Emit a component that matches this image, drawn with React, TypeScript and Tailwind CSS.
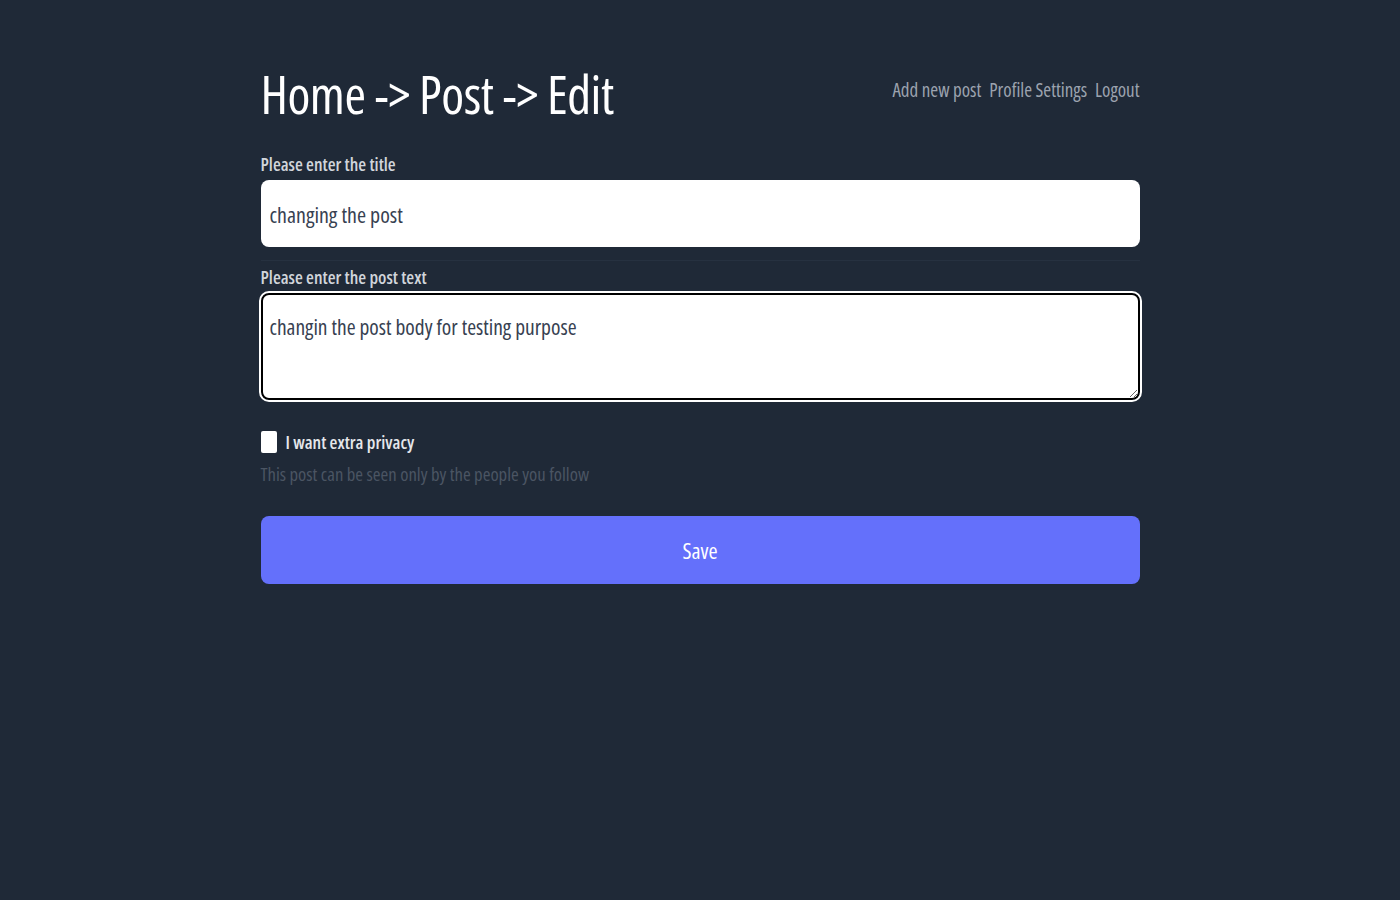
export default function App() {
  return (
    <div className="min-h-screen bg-[#1f2937] font-['Open_Sans','DejaVu_Sans',sans-serif] [font-stretch:75%]">
      <div className="mx-auto w-[879px] pt-[58px]">
        {/* Header */}
        <div className="flex items-start justify-between">
          <h1 className="text-[52px] leading-[72px] text-white font-normal tracking-[-0.5px]">Home -&gt; Post -&gt; Edit</h1>
          <nav className="flex gap-[8px] pt-[18px] text-[19px] leading-[28px] text-[#9ca3af]">
            <a href="#">Add new post</a>
            <a href="#">Profile Settings</a>
            <a href="#">Logout</a>
          </nav>
        </div>

        {/* Title */}
        <label className="mt-[20px] block text-[18px] leading-[28px] font-semibold text-[#d1d5db]">Please enter the title</label>
        <input
          className="mt-[2px] block h-[67px] w-full rounded-lg bg-white px-[9px] text-[22px] text-[#374151] outline-none"
          defaultValue="changing the post"
        />

        {/* Body */}
        <label className="mt-[13px] block border-t border-[#263140] pt-[2px] text-[18px] leading-[28px] font-semibold text-[#d1d5db]">Please enter the post text</label>
        <textarea
          className="mt-[2px] block h-[107px] w-full resize-y rounded-lg border-2 border-black bg-white px-[7px] pt-[17px] text-[21.5px] leading-[30px] text-[#374151] outline outline-2 outline-white"
          defaultValue="changin the post body for testing purpose"
        />

        {/* Privacy */}
        <label className="mt-[28px] flex items-center gap-[9px] text-[18px] leading-[28px] font-semibold text-[#e5e7eb]">
          <span className="block h-[22px] w-[16px] rounded-[2px] bg-white" />
          I want extra privacy
        </label>
        <p className="mt-[4px] text-[18.7px] leading-[28px] text-[#4b5563]">This post can be seen only by the people you follow</p>

        <button className="mt-[28px] block h-[68px] w-full rounded-lg bg-[#6470fb] text-[22px] text-white">Save</button>
      </div>
    </div>
  )
}
